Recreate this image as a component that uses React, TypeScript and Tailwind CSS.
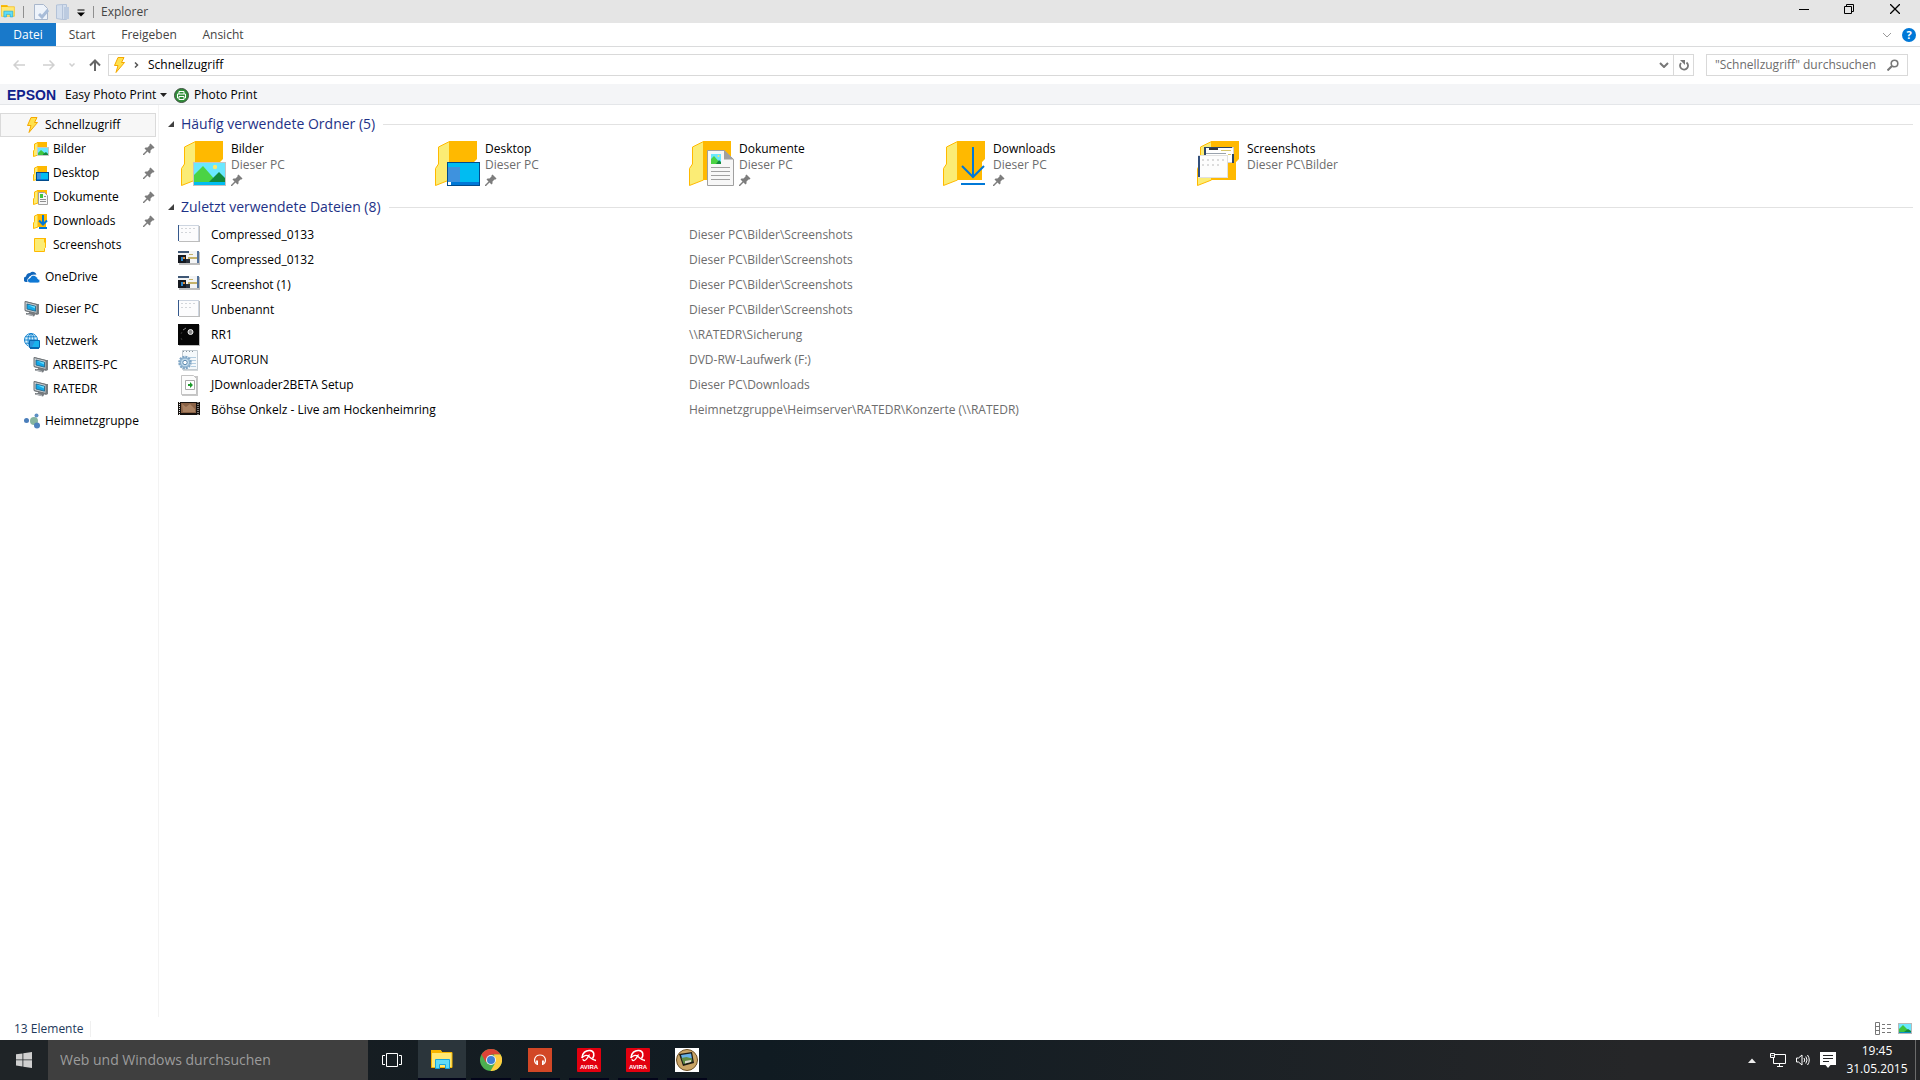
import type { ReactNode } from 'react';

type IconProps = { className?: string };

function QuickAccessIcon({ className = 'w-4 h-4' }: IconProps) {
  return (
    <svg viewBox="0 0 16 16" className={className}>
      <path d="M6 0.5h6L9.5 5.5h3L4 15.5l2-7H2.5z" fill="#ffe14d" stroke="#f5a800" />
    </svg>
  );
}

function PinIcon() {
  return (
    <svg viewBox="0 0 12 12" className="w-3 h-3">
      <path d="M7.500 0.500L11.500 4.500l-1 1-1 0L7.500 7.500v2l-1 1L4.500 8.500 1 12l-1 0 0-1 3.500-3.500L1.500 5.500l1-1h2l2-2v-1z" fill="#7d7d7d" />
    </svg>
  );
}

function FolderShell({ children }: { children?: ReactNode }) {
  return (
    <svg viewBox="0 0 46 46" className="w-[46px] h-[46px]">
      <path d="M14 0h28v18l-3 3v18H14z" fill="#ffb900" />
      <path d="M0.500 44.500V27.500l3-4.500V6L14.500 0.500V39z" fill="#fbec75" stroke="#ffb900" />
      {children}
    </svg>
  );
}

function PictureArt() {
  return (
    <g>
      <rect x="12.500" y="21.500" width="32" height="23" fill="#6ae8ff" stroke="#c4c4c4" />
      <circle cx="34" cy="26" r="2.200" fill="#fbe96c" />
      <path d="M13 34l9-9 14 16H13z" fill="#4bd344" />
      <path d="M28 41l10-10 6 6v4z" fill="#128a3c" />
      <rect x="13" y="41" width="31" height="3" fill="#00bcf2" />
    </g>
  );
}

function DesktopArt() {
  return (
    <g>
      <rect x="12.500" y="21.500" width="32" height="23" fill="#00bcf2" stroke="#004b8c" />
      <rect x="13" y="26" width="12" height="15" fill="#3e92de" />
      <rect x="13" y="41" width="31" height="3" fill="#0078d7" />
      <rect x="13" y="41" width="3" height="3" fill="#fff" />
    </g>
  );
}

function DocumentArt() {
  return (
    <g>
      <path d="M18.500 9.500H35l9.500 9v26h-26z" fill="#f7f7f7" stroke="#a0a0a0" />
      <path d="M35 9l10 9.500H35z" fill="#a0a0a0" />
      <rect x="22" y="13" width="10" height="10" fill="#6ae8ff" />
      <path d="M22 18l3-3 7 8H22z" fill="#4bd344" />
      <path d="M27 23l3-4 2 2v2z" fill="#128a3c" />
      <circle cx="29.500" cy="15" r="1" fill="#fbe96c" />
      <path d="M22 26.500h19M22 30.500h19M22 34.500h19M22 38.500h19" stroke="#a0a0a0" />
    </g>
  );
}

function DownloadArt() {
  return (
    <g stroke="#0078d7" strokeWidth="2" fill="none">
      <path d="M30 6v30M19 25l11 11 11-11M18 43h24" />
    </g>
  );
}

function ScreenshotArt() {
  return (
    <g>
      <rect x="7.500" y="6.500" width="29" height="15" fill="#fff" stroke="#cfcfcf" />
      <path d="M7 6h2v8H7zM35 13h2v9h-2zM7 6h28v1H7z" fill="#2c4568" />
      <path d="M12 8h9" stroke="#33373d" strokeWidth="2" />
      <path d="M24 9.500h10M31 13.500h3" stroke="#d7c66a" />
      <path d="M9 12.500h20" stroke="#9aa3ad" />
      <rect x="1.500" y="14.500" width="29" height="22" fill="#fdfdfd" stroke="#e0e0e0" />
      <path d="M1 15h2v21H1z" fill="#33507c" />
      <path d="M5 19h22M5 24h18" stroke="#dcdcdc" strokeWidth="2" strokeDasharray="2 3" />
    </g>
  );
}

function SmallFolder({ children }: { children?: ReactNode }) {
  return (
    <svg viewBox="0 0 16 16" className="w-4 h-4">
      <path d="M4 1h10v7l-1 1v5H4z" fill="#ffb900" />
      <path d="M0.500 15.500V10l1-1.500V3L5 1.500V14z" fill="#fbec75" stroke="#ffb900" />
      {children}
    </svg>
  );
}

function SmallPicture() {
  return (
    <SmallFolder>
      <rect x="4.500" y="6.500" width="11" height="8" fill="#6ae8ff" stroke="#c8c8c8" />
      <path d="M5 12l3-3 6 5H5z" fill="#3fc53f" />
      <path d="M10 13l3-2 2 2v1h-5z" fill="#128a3c" />
    </SmallFolder>
  );
}

function SmallDesktop() {
  return (
    <SmallFolder>
      <rect x="3.500" y="7.500" width="12" height="8" fill="#00bcf2" stroke="#004b8c" />
      <path d="M4 8h4v6H4z" fill="#3e92de" />
      <path d="M4 14h11v1H4z" fill="#0078d7" />
    </SmallFolder>
  );
}

function SmallDocument() {
  return (
    <SmallFolder>
      <path d="M5.500 3.500h6l3 3v9h-9z" fill="#f7f7f7" stroke="#a0a0a0" />
      <path d="M7 5h3v4H7z" fill="#3fc53f" />
      <path d="M7 10.500h6M7 12.500h6M11 7.500h2" stroke="#8f8f8f" />
    </SmallFolder>
  );
}

function SmallDownload() {
  return (
    <SmallFolder>
      <path d="M10 2v10M6 7.500l4 4 4-4M6 15h8" stroke="#0078d7" strokeWidth="2" fill="none" />
    </SmallFolder>
  );
}

function PlainFolder() {
  return (
    <svg viewBox="0 0 16 16" className="w-4 h-4">
      <path d="M1.500 1.500h11v9l-1 1v3h-10z" fill="#fbec75" stroke="#ffb900" />
      <path d="M11 1h2v5h-1l-1-1z" fill="#ffb900" />
    </svg>
  );
}

function OneDriveIcon() {
  return (
    <svg viewBox="0 0 16 16" className="w-4 h-4">
      <path d="M2 13a2.800 2.800 0 0 1 0-5.500A4 4 0 0 1 6 4a4 4 0 0 1 4-1 4 4 0 0 1 2.500 2.500L8 6 5 8l-1 5z" fill="#1166bb" />
      <path d="M6 14a2.500 2.500 0 0 1 0-5A3.500 3.500 0 0 1 12.500 8 2.600 2.600 0 0 1 14 10a2 2 0 0 1 0 4z" fill="#0f78d4" stroke="#fff" strokeWidth="0.800" />
    </svg>
  );
}

function ComputerIcon() {
  return (
    <svg viewBox="0 0 16 16" className="w-4 h-4">
      <path d="M1 0l12 3 2 0v10l-2 1L1 10z" fill="#7b8084" />
      <path d="M1 0.500l12 3v9l-12-3z" fill="#c9ced2" stroke="#6d7276" />
      <path d="M3 3l8.500 2.200v5L3 8z" fill="#12a8ea" stroke="#1f5f80" strokeWidth="0.800" />
      <path d="M4 4l7 3.500v-2z" fill="#6adcfb" />
      <path d="M5 11l6 1.500v1.500l-1 1.500-8-2v-1.500l3 0z" fill="#777c80" />
      <path d="M3 13l6 1.500" stroke="#b9bdc0" />
    </svg>
  );
}

function NetworkIcon() {
  return (
    <svg viewBox="0 0 16 16" className="w-4 h-4">
      <circle cx="7" cy="7" r="6.500" fill="#d9f2fd" stroke="#1683ce" />
      <ellipse cx="7" cy="7" rx="3" ry="6.500" fill="none" stroke="#1683ce" />
      <path d="M0.500 7h13M1.500 3.800h11M1.500 10.200h11M7 0.500v13" stroke="#1683ce" />
      <path d="M5.500 7.500h10v7h-10z" fill="#19b3ee" stroke="#0867ae" />
      <path d="M6 8h5l-3 6H6z" fill="#2c93dc" />
      <path d="M6 15.500h9" stroke="#0867ae" />
    </svg>
  );
}

function HomegroupIcon() {
  return (
    <svg viewBox="0 0 16 16" className="w-4 h-4">
      <circle cx="2.500" cy="7.500" r="2.500" fill="#4a7ebb" />
      <circle cx="10" cy="8" r="4" fill="#86b5a0" />
      <circle cx="12.500" cy="2.500" r="2" fill="#5c8fc4" />
      <circle cx="13" cy="12.500" r="3" fill="#4d82bd" />
    </svg>
  );
}

type ThumbKind = 'sheet' | 'shot' | 'photo' | 'config' | 'setup' | 'film';

function FileThumb({ kind }: { kind: ThumbKind }) {
  return (
    <svg viewBox="0 0 22 22" className="w-[22px] h-[22px]">
      {kind === 'sheet' && (
        <g>
          <path d="M1 2h21v16H1z" fill="#bdbdbd" />
          <path d="M0 1h21v16H0z" fill="#fcfcfd" />
          <path d="M0 1h1v16H0z" fill="#35588c" />
          <path d="M1 1.500h20M20.500 1v16" stroke="#cdd5e0" />
          <path d="M3 4.500h14M3 8.500h12" stroke="#d3d6da" strokeDasharray="2 2" />
        </g>
      )}
      {kind === 'shot' && (
        <g>
          <path d="M1 3h21v13H1z" fill="#bdbdbd" />
          <path d="M0 2h21v12H0z" fill="#f3f4f5" />
          <path d="M0 2h11v2H0z" fill="#3f5775" />
          <path d="M0 6h8v8H0z" fill="#16191f" />
          <path d="M10 8h9v2h-9zM11 5h4v1h-4z" fill="#c5b26b" />
          <path d="M3 8h2v4H3z" fill="#2c87cb" />
          <path d="M5 8h2v2H5z" fill="#db8a38" />
          <path d="M8 10h4v4H8z" fill="#29313c" />
          <path d="M19 2h2v12h-2z" fill="#50709a" />
        </g>
      )}
      {kind === 'photo' && (
        <g>
          <path d="M1 1h21v21H1z" fill="#bdbdbd" />
          <path d="M0 0h21v21H0z" fill="#050505" />
          <circle cx="12.500" cy="8" r="2.500" fill="#8a8a8a" stroke="#eee" />
          <path d="M5 6l3-2" stroke="#888" />
          <path d="M3 10l1-2M3 14l1 2" stroke="#333" />
        </g>
      )}
      {kind === 'config' && (
        <g>
          <path d="M5 2h15v20H5z" fill="#d4d8da" />
          <path d="M4.500 1.500h15v19h-15z" fill="#f5f9fb" stroke="#c3ccd2" />
          <path d="M5 2.500h12" stroke="#87929a" strokeDasharray="1 2" />
          <path d="M12 8.500h6M13 11.500h5M14 14.500h4M13 17.500h5" stroke="#b3cde0" />
          <circle cx="7" cy="13.500" r="5.800" fill="#b7d4e9" stroke="#7fa5c4" strokeWidth="2" strokeDasharray="2 1" />
          <circle cx="7" cy="13.500" r="4.500" fill="#c3dced" stroke="#7fa5c4" />
          <circle cx="7" cy="13.500" r="2.200" fill="#fff" stroke="#5c88ad" />
        </g>
      )}
      {kind === 'setup' && (
        <g>
          <path d="M4 2h16v20H4z" fill="#c7c7c7" />
          <path d="M3.500 1.500h12l3 3v16h-15z" fill="#fcfcfc" stroke="#c3c3c3" />
          <path d="M7.500 6.500h9v9h-9z" fill="#fff" stroke="#a8a8a8" />
          <path d="M10 10h2V8l3 3-3 3v-2h-2z" fill="#1c9a29" />
        </g>
      )}
      {kind === 'film' && (
        <g>
          <path d="M0 3h22v13H0z" fill="#17120f" />
          <path d="M3 4h15v10H3z" fill="#8a6246" />
          <path d="M4 5l4 3 4-3 5 5v3H5z" fill="#aa8263" />
          <path d="M1.500 3v13M20 3v13" stroke="#e6e6e6" strokeDasharray="1 1" />
        </g>
      )}
    </svg>
  );
}

function ExplorerIcon({ className }: IconProps) {
  return (
    <svg viewBox="0 0 22 20" className={className}>
      <path d="M0.500 0.500h9l1.500 2h10v15h-20.500z" fill="#ffe873" stroke="#f8b600" />
      <path d="M0 0h10l1 3H0z" fill="#f8b600" />
      <path d="M4.500 18.500v-9h14v9h-4v-4h-6v4z" fill="#5fdcf8" stroke="#18a5dc" />
    </svg>
  );
}

function ChromeIcon() {
  return (
    <svg viewBox="0 0 22 22" className="w-[22px] h-[22px]">
      <circle cx="11" cy="11" r="11" fill="#4caf50" />
      <path d="M1.500 5.500A11 11 0 0 1 20.500 5.500H11l-5 8z" fill="#dc4437" />
      <path d="M20.500 5.500A11 11 0 0 1 10.500 22l5-8.500L14 5.500z" fill="#ffcd40" />
      <circle cx="11" cy="11" r="5" fill="#f4f4f4" />
      <circle cx="11" cy="11" r="4" fill="#3f7fd4" />
    </svg>
  );
}

function MusicIcon() {
  return (
    <svg viewBox="0 0 24 24" className="w-6 h-6">
      <path d="M0 0h24v24H0z" fill="#d24726" />
      <path d="M8.500 16C5 13 6.500 7 12 7s7 6 3.500 9" fill="none" stroke="#fff" strokeWidth="1.200" />
      <path d="M8 12.500h2V17H8.500zM14 12.500h2L15.500 17H14z" fill="#fff" />
    </svg>
  );
}

function AviraIcon() {
  return (
    <svg viewBox="0 0 24 24" className="w-6 h-6">
      <rect width="24" height="24" rx="1" fill="#e2000f" />
      <path d="M5 10C5 5 9 2 13 2.500c4 0.500 5 4 2.500 8" fill="none" stroke="#fff" strokeWidth="1.600" />
      <path d="M5 10c1.500-2.500 4.500-3.500 7-1.500s3.500 3.500 7 4M12.500 6.500C11 9 9.500 13 7 12.500c-1-0.200-1-1-0.800-1.500" fill="none" stroke="#fff" strokeWidth="1.300" />
      <text x="12" y="21" textAnchor="middle" fontSize="6" fontWeight="700" fill="#fff" fontFamily="Liberation Sans, sans-serif">AVIRA</text>
    </svg>
  );
}

function PhotoIcon() {
  return (
    <svg viewBox="0 0 24 24" className="w-6 h-6">
      <path d="M0 0h24v24H0z" fill="#fff" />
      <circle cx="12" cy="12" r="10.500" fill="#c9a465" stroke="#6d5026" />
      <path d="M4 6l13-2 2 11-11 3z" fill="#1c1a17" />
      <path d="M6 7l10-1.500 1 5-9.500 1.500z" fill="#66b0e6" />
      <path d="M6.500 10l5-1 5.500 1.500 0.500 3L8.500 16z" fill="#5f8c45" />
      <path d="M10 13l6-1v2l-6 1.500z" fill="#d9d5cb" />
    </svg>
  );
}

const pinned = [
  { name: 'Bilder', icon: <SmallPicture />, pin: true },
  { name: 'Desktop', icon: <SmallDesktop />, pin: true },
  { name: 'Dokumente', icon: <SmallDocument />, pin: true },
  { name: 'Downloads', icon: <SmallDownload />, pin: true },
  { name: 'Screenshots', icon: <PlainFolder />, pin: false },
];

const folders = [
  { name: 'Bilder', path: 'Dieser PC', art: <PictureArt />, pin: true },
  { name: 'Desktop', path: 'Dieser PC', art: <DesktopArt />, pin: true },
  { name: 'Dokumente', path: 'Dieser PC', art: <DocumentArt />, pin: true },
  { name: 'Downloads', path: 'Dieser PC', art: <DownloadArt />, pin: true },
  { name: 'Screenshots', path: 'Dieser PC\\Bilder', art: <ScreenshotArt />, pin: false },
];

const files: { name: string; path: string; kind: ThumbKind }[] = [
  { name: 'Compressed_0133', path: 'Dieser PC\\Bilder\\Screenshots', kind: 'sheet' },
  { name: 'Compressed_0132', path: 'Dieser PC\\Bilder\\Screenshots', kind: 'shot' },
  { name: 'Screenshot (1)', path: 'Dieser PC\\Bilder\\Screenshots', kind: 'shot' },
  { name: 'Unbenannt', path: 'Dieser PC\\Bilder\\Screenshots', kind: 'sheet' },
  { name: 'RR1', path: '\\\\RATEDR\\Sicherung', kind: 'photo' },
  { name: 'AUTORUN', path: 'DVD-RW-Laufwerk (F:)', kind: 'config' },
  { name: 'JDownloader2BETA Setup', path: 'Dieser PC\\Downloads', kind: 'setup' },
  { name: 'Böhse Onkelz - Live am Hockenheimring', path: 'Heimnetzgruppe\\Heimserver\\RATEDR\\Konzerte (\\\\RATEDR)', kind: 'film' },
];

const apps = [
  { name: 'Chrome', icon: <ChromeIcon /> },
  { name: 'Musik', icon: <MusicIcon /> },
  { name: 'Avira', icon: <AviraIcon /> },
  { name: 'Avira Launcher', icon: <AviraIcon /> },
  { name: 'Fotos', icon: <PhotoIcon /> },
];

function TitleBar() {
  return (
    <header className="flex h-[23px] items-center bg-[#e5e5e5]">
      <ExplorerIcon className="ml-px h-[13px] w-[14px]" />
      <span className="ml-2 h-3 w-px bg-[#8f8f8f]" />
      <div className="ml-2.5 flex gap-1.5">
        <button aria-label="Eigenschaften">
          <svg viewBox="0 0 16 16" className="h-4 w-4">
            <path d="M0.500 0.500h9l4 4v11h-13z" fill="#eef3fa" stroke="#a9b7cc" />
            <path d="M5 10l3 3 6-7" stroke="#a8bcd8" strokeWidth="3" fill="none" />
          </svg>
        </button>
        <button aria-label="Neuer Ordner">
          <svg viewBox="0 0 16 16" className="h-4 w-4">
            <path d="M0.500 1l6-0.500v15l-6-1zM6.500 0.500h4v15h-4z" fill="#d3deed" stroke="#b3c2d8" />
            <path d="M8 3h5v12H8z" fill="#bccbe0" />
          </svg>
        </button>
      </div>
      <button aria-label="Symbolleiste anpassen" className="ml-[5px] pt-0.5">
        <svg viewBox="0 0 8 8" className="h-2 w-2">
          <path d="M0.500 1h7" stroke="#000" />
          <path d="M0 3.500h8L4 7.500z" fill="#000" />
        </svg>
      </button>
      <span className="ml-2 h-3 w-px bg-[#8f8f8f]" />
      <h1 className="ml-[7px] text-xs text-[#444]">Explorer</h1>
      <div className="mr-0.5 mb-1.5 ml-auto flex">
        <button aria-label="Minimieren" className="flex w-[45px] justify-center">
          <svg viewBox="0 0 10 10" className="h-2.5 w-2.5"><path d="M0 5.500h10" stroke="#000" /></svg>
        </button>
        <button aria-label="Wiederherstellen" className="flex w-[45px] justify-center">
          <svg viewBox="0 0 10 10" className="h-2.5 w-2.5">
            <path d="M0.500 2.500h7v7h-7zM2.500 2.500v-2h7v7h-2" fill="none" stroke="#000" />
          </svg>
        </button>
        <button aria-label="Schließen" className="flex w-[47px] justify-center">
          <svg viewBox="0 0 10 10" className="h-2.5 w-2.5"><path d="M0 0l10 10M10 0L0 10" stroke="#000" strokeWidth="1.300" /></svg>
        </button>
      </div>
    </header>
  );
}

function Ribbon() {
  return (
    <div className="flex h-6 items-center border-b border-[#dadbdc] text-[#444]">
      <button className="h-[23px] w-14 bg-[#1979ca] text-white">Datei</button>
      <button className="w-[52px]">Start</button>
      <button className="w-[82px]">Freigeben</button>
      <button className="w-[66px]">Ansicht</button>
      <div className="mr-1 ml-auto flex items-center gap-2.5">
        <button aria-label="Menüband erweitern">
          <svg viewBox="0 0 10 6" className="h-1.5 w-2.5"><path d="M1 1l4 4 4-4" fill="none" stroke="#9a9a9a" /></svg>
        </button>
        <button aria-label="Hilfe" className="h-3.5 w-3.5 rounded-full bg-[#0078d7] text-[11px] leading-[14px] font-bold text-white">?</button>
      </div>
    </div>
  );
}

function AddressBar() {
  return (
    <div className="flex h-[37px] items-center px-3 pb-px">
      <button aria-label="Zurück" className="ml-px">
        <svg viewBox="0 0 12 10" className="h-2.5 w-3"><path d="M12 5H1M5.500 0.500L1 5l4.500 4.500" fill="none" stroke="#d0d0d0" strokeWidth="1.500" /></svg>
      </button>
      <button aria-label="Vorwärts" className="ml-[18px]">
        <svg viewBox="0 0 12 10" className="h-2.5 w-3"><path d="M0 5h11M6.500 0.500L11 5 6.500 9.500" fill="none" stroke="#d0d0d0" strokeWidth="1.500" /></svg>
      </button>
      <button aria-label="Verlauf" className="ml-3.5">
        <svg viewBox="0 0 6 4" className="h-1 w-1.5"><path d="M0.500 0.500L3 3l2.500-2.500" fill="none" stroke="#d0d0d0" strokeWidth="1.500" /></svg>
      </button>
      <button aria-label="Nach oben" className="ml-3.5">
        <svg viewBox="0 0 12 12" className="h-3 w-3"><path d="M6 12V1.500M1 6.500l5-5 5 5" fill="none" stroke="#666" strokeWidth="2" /></svg>
      </button>
      <div className="ml-[7px] flex h-[22px] flex-1 items-center border border-[#d9d9d9] pl-[3px]">
        <QuickAccessIcon />
        <svg viewBox="0 0 5 6" className="ml-1.5 h-1.5 w-[5px]"><path d="M1 0.500L3.500 3 1 5.500" fill="none" stroke="#555" strokeWidth="1.500" /></svg>
        <span className="ml-[9px]">Schnellzugriff</span>
        <button aria-label="Vorherige Orte" className="mr-1 ml-auto">
          <svg viewBox="0 0 10 6" className="h-1.5 w-2.5"><path d="M1 1l4 4 4-4" fill="none" stroke="#777" strokeWidth="2" /></svg>
        </button>
        <button aria-label="Aktualisieren" className="flex h-full w-5 items-center justify-center border-l border-[#d9d9d9]">
          <svg viewBox="0 0 10 12" className="h-3 w-2.5">
            <path d="M7.500 3.500A4 4 0 1 1 2 4" fill="none" stroke="#777" strokeWidth="1.800" />
            <path d="M1 1h5v5l-2-2z" fill="#777" />
          </svg>
        </button>
      </div>
      <label className="ml-3 flex h-[22px] w-[202px] items-center border border-[#d9d9d9] px-2">
        <input type="text" aria-label="Schnellzugriff durchsuchen" placeholder={'"Schnellzugriff" durchsuchen'} className="min-w-0 flex-1 outline-none placeholder:text-[#6d6d6d]" />
        <svg viewBox="0 0 12 12" className="h-3 w-3">
          <circle cx="7.500" cy="4.500" r="3.300" fill="none" stroke="#777" strokeWidth="1.600" />
          <path d="M5 7L0.500 11.500" stroke="#777" strokeWidth="2" />
        </svg>
      </label>
    </div>
  );
}

function EpsonBar() {
  return (
    <div className="flex h-[21px] items-center border-b border-[#e4e6e9] bg-[#f4f5f7] pt-0.5 pl-[7px] text-black">
      <span className="w-[58px] font-['Liberation_Sans',sans-serif] text-sm leading-4 font-bold text-[#10218b]">EPSON</span>
      <button className="flex w-[102px] items-center justify-between whitespace-nowrap">
        Easy Photo Print
        <svg viewBox="0 0 7 4" className="h-1 w-[7px]"><path d="M0 0h7L3.500 4z" fill="#222" /></svg>
      </button>
      <button className="ml-[7px] flex items-center gap-[5px]">
        <svg viewBox="0 0 15 15" className="h-[15px] w-[15px]">
          <circle cx="7.500" cy="7.500" r="7" fill="#2f8f38" stroke="#3e4f40" />
          <path d="M5 6V3.500h5V6M4.500 10h-1V6h8v4h-1M5 8.500h5v3H5z" fill="none" stroke="#fff" />
        </svg>
        Photo Print
      </button>
    </div>
  );
}

function Sidebar() {
  return (
    <nav className="flex w-[159px] shrink-0 flex-col gap-2 border-r border-[#f3f3f3] pt-2 text-black">
      <div>
        <a href="#schnellzugriff" className="mr-0.5 flex h-6 items-center gap-1 border border-[#dadada] bg-[#f7f7f7] pl-6">
          <QuickAccessIcon />
          Schnellzugriff
        </a>
        {pinned.map((item) => (
          <a key={item.name} href={`#${item.name}`} className="flex h-6 items-center gap-1 pr-[3px] pl-[33px]">
            {item.icon}
            <span className="flex-1">{item.name}</span>
            {item.pin && <PinIcon />}
          </a>
        ))}
      </div>
      <a href="#onedrive" className="flex h-6 items-center gap-[5px] pl-6">
        <OneDriveIcon />
        OneDrive
      </a>
      <a href="#pc" className="flex h-6 items-center gap-[5px] pl-6">
        <ComputerIcon />
        Dieser PC
      </a>
      <div>
        <a href="#netzwerk" className="flex h-6 items-center gap-[5px] pl-6">
          <NetworkIcon />
          Netzwerk
        </a>
        <a href="#arbeits-pc" className="flex h-6 items-center gap-1 pl-[33px]">
          <ComputerIcon />
          ARBEITS-PC
        </a>
        <a href="#ratedr" className="flex h-6 items-center gap-1 pl-[33px]">
          <ComputerIcon />
          RATEDR
        </a>
      </div>
      <a href="#heimnetzgruppe" className="flex h-6 items-center gap-[5px] pl-6">
        <HomegroupIcon />
        Heimnetzgruppe
      </a>
    </nav>
  );
}

function GroupHeader({ title }: { title: string }) {
  return (
    <div className="flex h-[22px] items-center pr-[7px]">
      <svg viewBox="0 0 6 6" className="h-1.5 w-1.5"><path d="M6 0v6H0z" fill="#404040" /></svg>
      <h2 className="ml-[7px] pb-px text-sm leading-5 text-[#1e3287]">{title}</h2>
      <span className="ml-2 h-px flex-1 bg-[#e2e2e2]" />
    </div>
  );
}

function Content() {
  return (
    <main className="min-w-0 flex-1 pt-2 pl-[9px]">
      <GroupHeader title="Häufig verwendete Ordner (5)" />
      <div className="flex flex-wrap pt-1.5 pl-[13px]">
        {folders.map((folder) => (
          <a key={folder.name} href={`#${folder.name}`} className="flex h-[55px] w-[254px] gap-1">
            <FolderShell>{folder.art}</FolderShell>
            <div className="leading-4">
              <p className="text-black">{folder.name}</p>
              <p className="text-[#6d6d6d]">{folder.path}</p>
              {folder.pin && <div className="pt-px"><PinIcon /></div>}
            </div>
          </a>
        ))}
      </div>
      <GroupHeader title="Zuletzt verwendete Dateien (8)" />
      <table className="mt-1 ml-2.5 w-[calc(100%-18px)] table-fixed text-left">
        <tbody>
          {files.map((file) => (
            <tr key={file.name} className="h-[25px]">
              <td className="w-[33px] p-0"><FileThumb kind={file.kind} /></td>
              <td className="w-[478px] p-0 text-black">{file.name}</td>
              <td className="p-0 text-[#6d6d6d]">{file.path}</td>
            </tr>
          ))}
        </tbody>
      </table>
    </main>
  );
}

function StatusBar() {
  return (
    <footer className="flex h-[23px] items-center pl-3.5 text-[#1e395b]">
      <span className="border-r border-[#f0f0f0] pr-1.5">13 Elemente</span>
      <div className="mr-2 ml-auto flex items-center gap-[7px]">
        <button aria-label="Details">
          <svg viewBox="0 0 16 13" className="h-[13px] w-4">
            <path d="M0.500 0.500h4v12h-4zM0.500 4.500h4M0.500 8.500h4M7 2.500h3M12 2.500h4M7 6.500h3M12 6.500h4M7 10.500h3M12 10.500h4" fill="none" stroke="#777" />
          </svg>
        </button>
        <button aria-label="Große Symbole">
          <svg viewBox="0 0 14 11" className="h-[11px] w-3.5">
            <rect x="0.500" y="0.500" width="13" height="10" fill="#6ae8ff" stroke="#b8b8b8" />
            <path d="M1 6l4-4 7 7H1z" fill="#3fc53f" />
            <path d="M6 9l4-3 3 2v1z" fill="#128a3c" />
            <path d="M1 9h12v1H1z" fill="#0a8fc4" />
          </svg>
        </button>
      </div>
    </footer>
  );
}

function Taskbar() {
  return (
    <div className="flex h-10 bg-[#212325] bg-linear-to-r from-[#1b1f22] via-[#101b22] via-40% to-[#252628] to-85%">
      <button aria-label="Start" className="flex w-12 items-center justify-center bg-[#1f2427]">
        <svg viewBox="0 0 16 16" className="h-4 w-4">
          <path d="M0 2.300L6.500 1.400V7.500H0zM7.300 1.300L16 0v7.500H7.300zM0 8.300h6.500v6.200L0 13.600zM7.300 8.300H16V16l-8.700-1.300z" fill="#cfcfcf" />
        </svg>
      </button>
      <input type="text" aria-label="Web und Windows durchsuchen" placeholder="Web und Windows durchsuchen" className="w-80 bg-[#3f3f3f] px-3 text-sm text-white outline-none placeholder:text-[#9c9c9c]" />
      <button aria-label="Taskansicht" className="flex w-[50px] items-center justify-center pr-0.5">
        <svg viewBox="0 0 20 14" className="h-3.5 w-5">
          <path d="M4.500 0.500h11v13h-11zM3 2.500H0.500v9H3M17 2.500h2.500v9H17" fill="none" stroke="#fff" />
        </svg>
      </button>
      <button aria-label="Explorer" className="flex w-12 items-center justify-center border-b-2 border-[#03051a] bg-[#2b353b] pt-0.5">
        <ExplorerIcon className="h-5 w-[22px]" />
      </button>
      <div className="ml-[5px] flex gap-[9px]">
        {apps.map((app) => (
          <button key={app.name} aria-label={app.name} className="flex w-10 items-center justify-center border-b-2 border-[#03051a] pt-0.5">
            {app.icon}
          </button>
        ))}
      </div>
      <div className="ml-auto flex items-center text-white">
        <button aria-label="Ausgeblendete Symbole">
          <svg viewBox="0 0 8 5" className="h-[5px] w-2"><path d="M0 5l4-4.500L8 5z" fill="#eee" /></svg>
        </button>
        <button aria-label="Netzwerk" className="ml-3.5">
          <svg viewBox="0 0 16 14" className="h-3.5 w-4">
            <path d="M5 1.500h10.500v9H3.500V5M7 13.500h6M9.500 11v2M0.500 0.500h4v4h-4zM1.500 2l1 1 1-1" fill="none" stroke="#fff" />
          </svg>
        </button>
        <button aria-label="Lautstärke" className="ml-2.5">
          <svg viewBox="0 0 14 12" className="h-3 w-3.5">
            <path d="M0.500 4h2L6 1v10L2.500 8h-2zM8 4q1.500 2 0 4M9.800 2.500q2.500 3.500 0 7M11.500 1q3.500 5 0 10" fill="none" stroke="#fff" />
          </svg>
        </button>
        <button aria-label="Info-Center" className="ml-2.5">
          <svg viewBox="0 0 16 16" className="h-4 w-4">
            <path d="M0 0h16v13h-5.500L8 16l-2.500-3H0z" fill="#fff" />
            <path d="M3 3.500h10M3 6.500h10M3 9.500h6" stroke="#252628" />
          </svg>
        </button>
        <time className="ml-1.5 w-[70px] text-center text-xs leading-[18px]" dateTime="2015-05-31T19:45">
          19:45
          <br />
          31.05.2015
        </time>
        <span className="mr-1 ml-[3px] h-full w-px bg-[#6b6b6b]" />
      </div>
    </div>
  );
}

export default function App() {
  return (
    <div className="flex min-h-screen flex-col bg-white font-['Open_Sans','Noto_Sans',sans-serif] text-xs">
      <TitleBar />
      <Ribbon />
      <AddressBar />
      <EpsonBar />
      <div className="flex flex-1">
        <Sidebar />
        <Content />
      </div>
      <StatusBar />
      <Taskbar />
    </div>
  );
}
